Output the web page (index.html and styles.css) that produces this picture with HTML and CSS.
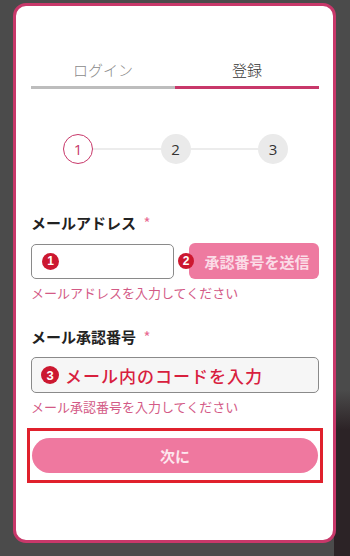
FILE: index.html
```html
<!DOCTYPE html>
<html lang="ja">
<head>
<meta charset="utf-8">
<link rel="stylesheet" href="styles.css">
</head>
<body>
<div class="card">
  <div class="tabs">
    <div class="tab">ログイン</div>
    <div class="tab active">登録</div>
  </div>
  <div class="stepper">
    <span class="step current">1</span>
    <span class="line"></span>
    <span class="step">2</span>
    <span class="line"></span>
    <span class="step">3</span>
  </div>
  <div class="label">メールアドレス <span class="req">*</span></div>
  <div class="row">
    <div class="input first"><span class="badge">1</span></div>
    <div class="send"><span class="badge badge-send">2</span>承認番号を送信</div>
  </div>
  <div class="error">メールアドレスを入力してください</div>
  <div class="label label2">メール承認番号 <span class="req">*</span></div>
  <div class="input code"><span class="badge badge-big">3</span><span class="hint">メール内のコードを入力</span></div>
  <div class="error">メール承認番号を入力してください</div>
  <div class="highlight">
    <div class="next">次に</div>
  </div>
</div>
</body>
</html>
```

FILE: styles.css
```css
html, body {
  margin: 0;
  padding: 0;
}
body {
  width: 350px;
  height: 556px;
  overflow: hidden;
  background:
    linear-gradient(to bottom, rgba(40,30,33,0) 0px, rgba(40,30,33,0) 390px, #2c2326 430px) right top / 16px 100% no-repeat,
    #4b4b4b;
  font-family: "Noto Sans CJK JP", "Noto Sans", sans-serif;
  padding: 3px 0 0 13px;
  box-sizing: border-box;
}
.card {
  width: 323px;
  height: 540px;
  box-sizing: border-box;
  background: #ffffff;
  border: 3px solid #c8386a;
  border-radius: 13px;
  padding: 48px 14px 0 15px;
}
.tabs {
  display: flex;
}
.tab {
  flex: 1;
  text-align: center;
  font-size: 15px;
  line-height: 24px;
  padding-top: 4px;
  padding-bottom: 4px;
  color: #8a8a8a;
  border-bottom: 3px solid #bdbdbd;
  font-family: "Noto Sans CJK JP", sans-serif;
  font-weight: 300;
}
.tab.active {
  color: #333333;
  border-bottom-color: #c8386a;
}
.stepper {
  display: flex;
  align-items: center;
  margin: 45px 31px 0 32px;
}
.step {
  width: 30px;
  height: 30px;
  border-radius: 50%;
  background: #eaeaea;
  color: #333;
  display: flex;
  align-items: center;
  justify-content: center;
  font-family: "Open Sans", sans-serif;
  font-size: 15px;
  box-sizing: border-box;
  flex: none;
}
.step.current {
  background: #fff;
  border: 1px solid #c8386a;
  color: #c8386a;
}
.line {
  flex: 1;
  height: 2px;
  background: #ececec;
}
.label {
  margin-top: 49px;
  font-size: 15px;
  font-weight: 700;
  line-height: 20px;
  color: #222;
}
.label2 {
  margin-top: 25px;
}
.req {
  color: #e86a92;
  font-weight: 400;
  margin-left: 4px;
}
.row {
  display: flex;
  align-items: center;
  margin-top: 10px;
}
.input {
  box-sizing: border-box;
  border: 1px solid #8a8a8a;
  border-radius: 5px;
  background: #fff;
  display: flex;
  align-items: center;
}
.input.first {
  width: 143px;
  height: 35px;
  padding-left: 10px;
}
.send {
  position: relative;
  margin-left: 15px;
  width: 130px;
  height: 36px;
  border-radius: 6px;
  background: #ee7aa0;
  color: #fbdce7;
  font-size: 15px;
  font-weight: 700;
  display: flex;
  align-items: center;
  justify-content: center;
  padding-left: 6px;
  box-sizing: border-box;
}
.badge {
  display: inline-flex;
  align-items: center;
  justify-content: center;
  width: 17px;
  height: 17px;
  border-radius: 50%;
  background: #cc1830;
  color: #fff;
  font-family: "Liberation Sans", sans-serif;
  font-weight: 700;
  font-size: 12px;
  flex: none;
}
.badge-send {
  position: absolute;
  left: -11px;
  top: 10px;
  width: 16px;
  height: 16px;
}
.error {
  margin-top: 4px;
  font-size: 13px;
  line-height: 19px;
  color: #d35a86;
}
.input.code {
  margin-top: 10px;
  height: 36px;
  width: 288px;
  background: #f6f6f6;
  padding-left: 9px;
}
.badge-big {
  width: 18px;
  height: 18px;
  font-size: 13px;
}
.hint {
  margin-left: 6px;
  color: #d8203e;
  font-size: 17px;
  font-weight: 500;
  letter-spacing: 1px;
}
.highlight {
  margin: 12px -4px 0 -4px;
  border: 3px solid #e0202c;
  padding: 7px 2px 7px 2px;
}
.next {
  height: 35px;
  border-radius: 18px;
  background: #ef789f;
  color: #fde6ee;
  font-size: 15px;
  font-weight: 700;
  display: flex;
  align-items: center;
  justify-content: center;
}
```
